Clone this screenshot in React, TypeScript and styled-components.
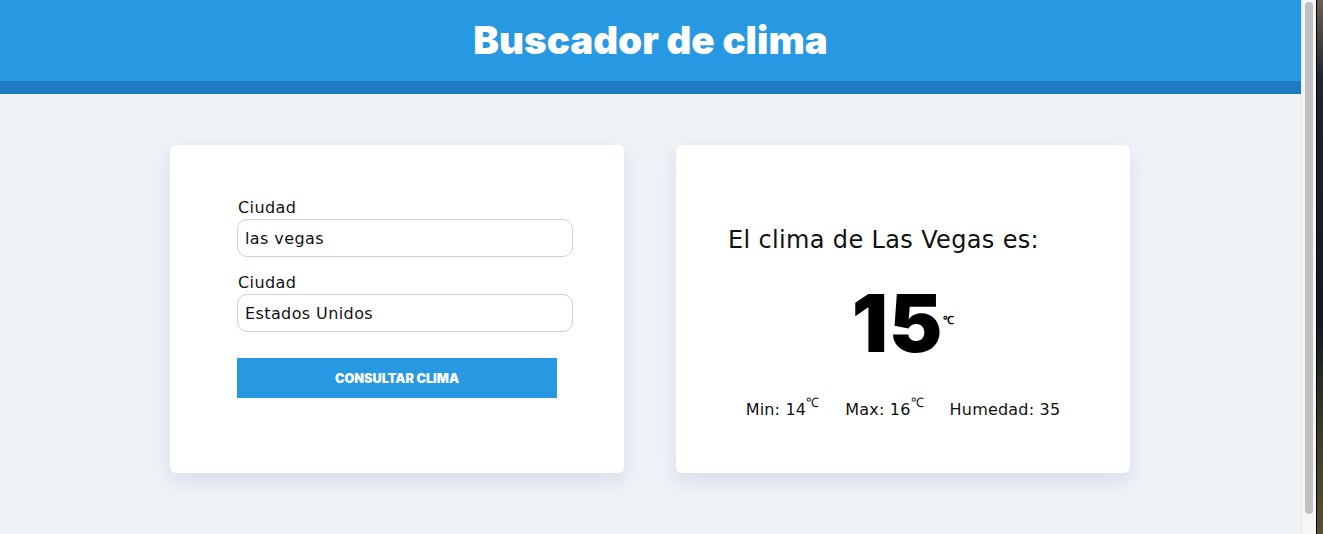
import React from "react";
import styled, { createGlobalStyle } from "styled-components";

const Global = createGlobalStyle`
  html, body { margin: 0; padding: 0; height: 100%; overflow: hidden; }
  body { font-family: "DejaVu Sans", sans-serif; background: #0d1420; }
  #root { height: 100%; }
`;

const Frame = styled.div`
  display: flex;
  height: 534px;
  width: 1323px;
`;

const Page = styled.div`
  flex: 0 0 1301px;
  background: #eef2f7;
  display: flex;
  flex-direction: column;
`;

const Scrollbar = styled.div`
  flex: 0 0 15px;
  background: #f6f6f6;
  border-left: 1px solid #e6e6e6;
  box-sizing: border-box;
  padding: 2px 3px 20px 3px;
  display: flex;
`;

const Thumb = styled.div`
  flex: 1;
  background: #c1c1c1;
  border-radius: 4px;
`;

const Desktop = styled.div`
  flex: 1;
  border-left: 1px solid #000;
  background: linear-gradient(180deg, #6b6050 0%, #1d2430 15%, #0f1824 60%, #3a3a22 80%, #5a5030 100%);
`;

const Header = styled.header`
  background: #2799e3;
  border-bottom: 13px solid #1e7bc3;
  height: 81px;
  display: flex;
  align-items: center;
  justify-content: center;
`;

const Title = styled.h1`
  margin: 0;
  color: #fff;
  font-family: Inter, "Liberation Sans", sans-serif;
  font-weight: 900;
  font-size: 38.5px;
  letter-spacing: 0;
  line-height: 1;
`;

const Main = styled.main`
  width: 960px;
  margin: 51px 0 0 170px;
  display: grid;
  grid-template-columns: 454px 454px;
  gap: 52px;
`;

const Card = styled.section`
  background: #fff;
  border-radius: 6px;
  height: 328px;
  box-sizing: border-box;
  box-shadow: 0 8px 18px rgba(30, 50, 80, 0.1);
`;

const FormCard = styled(Card)`
  padding: 52px 0 0 67px;
`;

const Form = styled.form`
  width: 320px;
  display: flex;
  flex-direction: column;
`;

const Field = styled.div`
  display: flex;
  flex-direction: column;
  margin-bottom: 15px;
`;

const Label = styled.label`
  font-size: 16px;
  letter-spacing: 0.4px;
  color: #111;
  line-height: 22px;
  margin-left: 1px;
`;

const Input = styled.input`
  width: 320px;
  height: 20px;
  padding: 8px 7px 8px 7px;
  border: 1px solid #c9d1dc;
  border-radius: 10px;
  font-family: "DejaVu Sans", sans-serif;
  font-size: 16px;
  letter-spacing: 0.4px;
  color: #111;
  background: #fff;
  outline: none;
`;

const Button = styled.button`
  margin-top: 11px;
  width: 320px;
  height: 40px;
  border: none;
  background: #2799e3;
  color: #fff;
  font-family: Inter, "Liberation Sans", sans-serif;
  font-weight: 900;
  font-size: 12.7px;
  letter-spacing: 0;
  text-transform: uppercase;
  cursor: pointer;
`;

const ResultCard = styled(Card)`
  display: flex;
  flex-direction: column;
  padding-top: 81px;
`;

const Heading = styled.h2`
  margin: 0 0 0 52px;
  font-weight: 400;
  font-size: 24px;
  letter-spacing: 0.35px;
  color: #111;
  line-height: 28px;
`;

const Temp = styled.p`
  margin: 26px 0 0;
  text-align: center;
  font-family: Inter, "Liberation Sans", sans-serif;
  font-weight: 900;
  font-size: 80px;
  line-height: 80px;
  letter-spacing: 1px;
  color: #000;
`;

const Unit = styled.span`
  font-family: "Liberation Serif", serif;
  font-weight: 700;
  font-size: 11px;
  letter-spacing: 0;
  vertical-align: 28px;
  margin-left: 0;
`;

const Stats = styled.div`
  margin-top: 37px;
  display: flex;
  justify-content: center;
  align-items: baseline;
  gap: 26px;
  font-size: 16px;
  line-height: 20px;
  letter-spacing: 0.2px;
  color: #111;
`;

const Sup = styled.span`
  font-family: "Liberation Serif", serif;
  font-size: 13px;
  line-height: 0;
  letter-spacing: 0;
  vertical-align: 8px;
`;

export default function App() {
  return (
    <>
      <Global />
      <Frame>
        <Page>
          <Header>
            <Title>Buscador de clima</Title>
          </Header>
          <Main>
            <FormCard>
              <Form onSubmit={(e) => e.preventDefault()}>
                <Field>
                  <Label htmlFor="city">Ciudad</Label>
                  <Input id="city" defaultValue="las vegas" />
                </Field>
                <Field>
                  <Label htmlFor="country">Ciudad</Label>
                  <Input id="country" defaultValue="Estados Unidos" />
                </Field>
                <Button type="submit">Consultar clima</Button>
              </Form>
            </FormCard>
            <ResultCard>
              <Heading>El clima de Las Vegas es:</Heading>
              <Temp>
                15<Unit>℃</Unit>
              </Temp>
              <Stats>
                <span>
                  Min: 14<Sup>℃</Sup>
                </span>
                <span>
                  Max: 16<Sup>℃</Sup>
                </span>
                <span>Humedad: 35</span>
              </Stats>
            </ResultCard>
          </Main>
        </Page>
        <Scrollbar>
          <Thumb />
        </Scrollbar>
        <Desktop />
      </Frame>
    </>
  );
}
